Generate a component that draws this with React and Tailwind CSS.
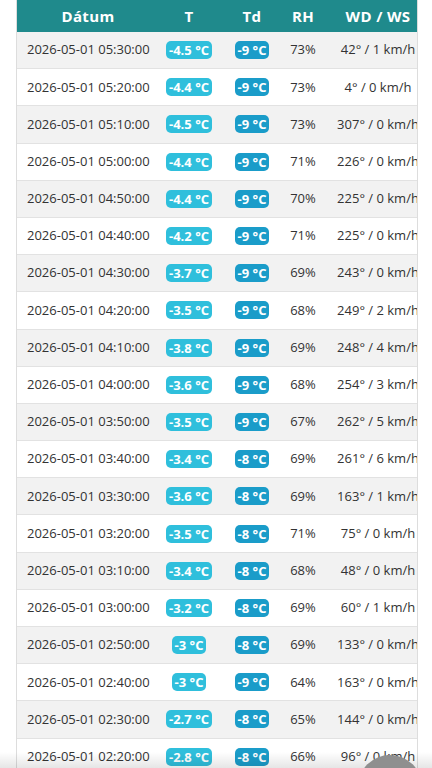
import React from 'react';

const rows = [
  ['2026-05-01 05:30:00', '-4.5', '-9', '73%', '42° / 1 km/h'],
  ['2026-05-01 05:20:00', '-4.4', '-9', '73%', '4° / 0 km/h'],
  ['2026-05-01 05:10:00', '-4.5', '-9', '73%', '307° / 0 km/h'],
  ['2026-05-01 05:00:00', '-4.4', '-9', '71%', '226° / 0 km/h'],
  ['2026-05-01 04:50:00', '-4.4', '-9', '70%', '225° / 0 km/h'],
  ['2026-05-01 04:40:00', '-4.2', '-9', '71%', '225° / 0 km/h'],
  ['2026-05-01 04:30:00', '-3.7', '-9', '69%', '243° / 0 km/h'],
  ['2026-05-01 04:20:00', '-3.5', '-9', '68%', '249° / 2 km/h'],
  ['2026-05-01 04:10:00', '-3.8', '-9', '69%', '248° / 4 km/h'],
  ['2026-05-01 04:00:00', '-3.6', '-9', '68%', '254° / 3 km/h'],
  ['2026-05-01 03:50:00', '-3.5', '-9', '67%', '262° / 5 km/h'],
  ['2026-05-01 03:40:00', '-3.4', '-8', '69%', '261° / 6 km/h'],
  ['2026-05-01 03:30:00', '-3.6', '-8', '69%', '163° / 1 km/h'],
  ['2026-05-01 03:20:00', '-3.5', '-8', '71%', '75° / 0 km/h'],
  ['2026-05-01 03:10:00', '-3.4', '-8', '68%', '48° / 0 km/h'],
  ['2026-05-01 03:00:00', '-3.2', '-8', '69%', '60° / 1 km/h'],
  ['2026-05-01 02:50:00', '-3', '-8', '69%', '133° / 0 km/h'],
  ['2026-05-01 02:40:00', '-3', '-9', '64%', '163° / 0 km/h'],
  ['2026-05-01 02:30:00', '-2.7', '-8', '65%', '144° / 0 km/h'],
  ['2026-05-01 02:20:00', '-2.8', '-8', '66%', '96° / 0 km/h'],
];

const cols = 'grid grid-cols-[142px_60px_66px_36px_114px]';

const App = () => {
  return (
    <div className="relative h-[768px] overflow-hidden bg-white" style={{ fontFamily: '"Open Sans", sans-serif' }}>
      <div className="ml-4 w-[402px] overflow-hidden border-x border-[#dddddd]">
        <div className="w-[418px]">
          {/* Header */}
          <div className={`${cols} h-8 items-center bg-[#1f8a8c] text-[15px] font-bold tracking-wide text-white`}>
            <div className="text-center">Dátum</div>
            <div className="text-center">T</div>
            <div className="text-center">Td</div>
            <div className="text-center">RH</div>
            <div className="text-center">WD / WS</div>
          </div>

          {/* Rows */}
          {rows.map((r, i) => (
            <div
              key={r[0]}
              className={`${cols} h-[37.2px] items-center border-b border-[#e2e2e2] text-[13px] text-[#333333] ${i % 2 === 0 ? 'bg-[#f2f2f2]' : 'bg-white'}`}
            >
              <div className="pl-[10px] whitespace-nowrap">{r[0]}</div>
              <div className="flex justify-center">
                <span className="rounded-[5px] bg-[#2fbfdc] px-[3px] text-[13px] leading-[18px] font-bold text-white whitespace-nowrap">{r[1]} °C</span>
              </div>
              <div className="flex justify-center">
                <span className="rounded-[5px] bg-[#1a9cc9] px-[3px] text-[13px] leading-[18px] font-bold text-white whitespace-nowrap">{r[2]} °C</span>
              </div>
              <div className="text-center">{r[3]}</div>
              <div className="text-center whitespace-nowrap">{r[4]}</div>
            </div>
          ))}
        </div>
      </div>

      {/* bottom shade */}
      <div className="pointer-events-none absolute inset-x-0 bottom-0 h-4 bg-gradient-to-b from-transparent to-black/10" />

      {/* floating button, partly off-screen */}
      <div className="absolute left-[358px] top-[755px] h-16 w-16 rounded-full bg-[#8f8f8f]" />
    </div>
  );
};

export default App;
